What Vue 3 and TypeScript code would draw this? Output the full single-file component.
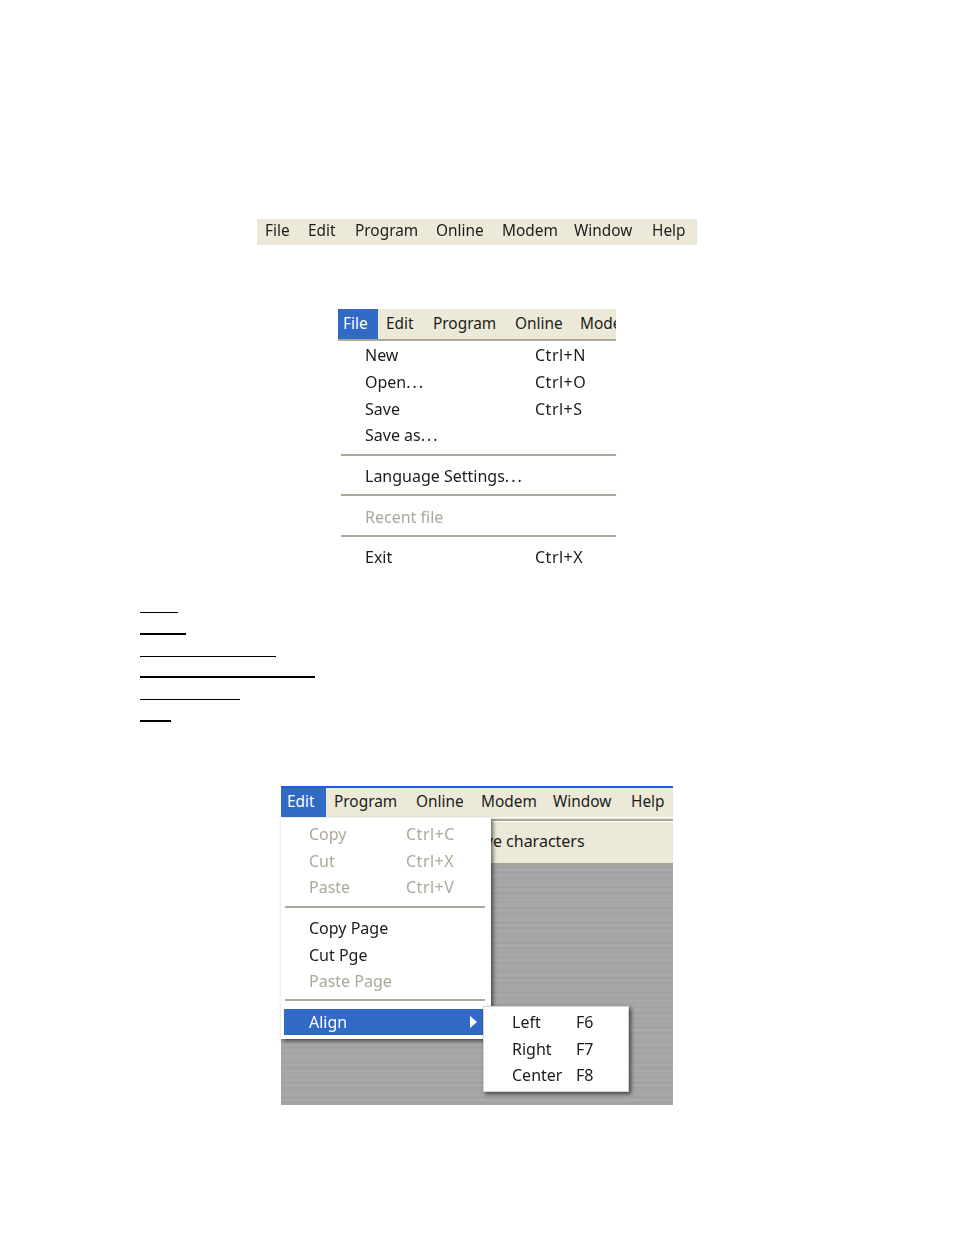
<script setup lang="ts">
interface Row { label: string; dots?: boolean; key?: string; off?: boolean }
const bar = ['File', 'Edit', 'Program', 'Online', 'Modem', 'Window', 'Help']
const fileGroups: Row[][] = [
  [{ label: 'New', key: 'Ctrl+N' }, { label: 'Open', dots: true, key: 'Ctrl+O' }, { label: 'Save', key: 'Ctrl+S' }, { label: 'Save as', dots: true }],
  [{ label: 'Language Settings', dots: true }],
  [{ label: 'Recent file', off: true }],
  [{ label: 'Exit', key: 'Ctrl+X' }],
]
const editGroups: Row[][] = [
  [{ label: 'Copy', key: 'Ctrl+C', off: true }, { label: 'Cut', key: 'Ctrl+X', off: true }, { label: 'Paste', key: 'Ctrl+V', off: true }],
  [{ label: 'Copy Page' }, { label: 'Cut Pge' }, { label: 'Paste Page', off: true }],
]
const sub = [{ label: 'Left', key: 'F6' }, { label: 'Right', key: 'F7' }, { label: 'Center', key: 'F8' }]
const links = [
  { w: 38, h: 1 }, { w: 46, h: 2 }, { w: 136, h: 1 }, { w: 175, h: 2 }, { w: 100, h: 1 }, { w: 31, h: 2 },
]
</script>

<template>
  <div class="page">
    <div class="menubar plain">
      <span v-for="m in bar" :key="m">{{ m }}</span>
    </div>

    <div class="fig-file">
      <div class="menubar file-bar">
        <span class="active">File</span>
        <span>Edit</span><span>Program</span><span>Online</span><span>Modem</span>
      </div>
      <div class="file-menu">
        <template v-for="(g, i) in fileGroups" :key="i">
          <hr v-if="i" class="sep" />
          <div v-for="r in g" :key="r.label" class="row" :class="{ off: r.off }">
            <span class="lab">{{ r.label }}<span v-if="r.dots" class="dots">...</span></span><span class="key">{{ r.key }}</span>
          </div>
        </template>
      </div>
    </div>

    <div class="links">
      <div v-for="(l, i) in links" :key="i" class="link-slot">
        <i :style="{ width: l.w + 'px', height: l.h + 'px' }"></i>
      </div>
    </div>

    <div class="fig-edit">
      <div class="menubar edit-bar">
        <span class="active">Edit</span>
        <span>Program</span><span>Online</span><span>Modem</span><span>Window</span><span>Help</span>
      </div>
      <div class="rule"></div>
      <div class="toolbar"><span>Save characters</span></div>
      <div class="canvas"></div>

      <div class="edit-menu">
        <template v-for="(g, i) in editGroups" :key="i">
          <hr v-if="i" class="sep" />
          <div v-for="r in g" :key="r.label" class="row" :class="{ off: r.off }">
            <span class="lab">{{ r.label }}</span><span class="key">{{ r.key }}</span>
          </div>
        </template>
        <hr class="sep last" />
        <div class="row align">
          <span>Align</span>
          <svg width="7" height="12" viewBox="0 0 7 12"><path d="M0 0 L7 6 L0 12 Z" fill="#fff" /></svg>
        </div>
      </div>

      <div class="sub-menu">
        <div v-for="r in sub" :key="r.label" class="row">
          <span class="lab">{{ r.label }}</span><span>{{ r.key }}</span>
        </div>
      </div>
    </div>
  </div>
</template>

<style>
html, body { background: #fff; }
</style>

<style scoped>
.page {
  width: 954px;
  height: 1235px;
  overflow: hidden;
  padding-top: 219px;
  box-sizing: border-box;
  font-family: "Noto Sans", "Open Sans", sans-serif;
  font-size: 16px;
  color: #1c1c1c;
  background: #fff;
}
.plain, .fig-file, .fig-edit { filter: blur(0.35px); }
.menubar {
  display: grid;
  align-items: center;
  background: #ece9d8;
  white-space: nowrap;
  overflow: hidden;
  font-size: 15.4px;
}
.menubar > span { padding-bottom: 3px; }
.plain {
  width: 440px;
  height: 26px;
  margin-left: 257px;
  padding-left: 8px;
  box-sizing: border-box;
  grid-template-columns: 43px 47px 81px 66px 72px 78px auto;
}
.fig-file {
  width: 278px;
  margin: 64px 0 0 338px;
}
.file-bar {
  height: 30px;
  grid-template-columns: 48px 47px 82px 65px 1fr;
  border-bottom: 2px solid #aca899;
}
.file-bar > span, .edit-bar > span { padding-bottom: 1px; }
.menubar > .active {
  background: #316ac5;
  color: #fff;
  align-self: stretch;
  display: flex;
  align-items: center;
  padding-bottom: 2px;
  box-sizing: border-box;
}
.file-bar .active { width: 40px; padding-left: 5px; }
.file-menu {
  padding: 0 0 0 3px;
}
.row {
  display: flex;
  align-items: center;
  height: 26.67px;
  box-sizing: border-box;
}
.row.off { color: #aca899; }
.lab { flex: none; }
.dots { letter-spacing: 2px; }
.key { letter-spacing: 0.5px; }
.file-menu .row { padding-left: 24px; padding-top: 2px; }
.file-menu .lab { width: 170px; }
.sep {
  border: 0;
  height: 2px;
  background: #aca899;
  margin: 6px 0;
}
.links {
  margin: 22px 0 0 140px;
}
.link-slot {
  height: 21.7px;
  display: flex;
  align-items: flex-end;
}
.link-slot i {
  display: block;
  background: #000;
}
.fig-edit {
  position: relative;
  width: 392px;
  height: 319px;
  margin: 64px 0 0 281px;
  display: flex;
  flex-direction: column;
}
.edit-bar {
  height: 31px;
  flex: none;
  grid-template-columns: 53px 82px 65px 72px 78px 1fr;
  border-top: 2px solid #1c5fd8;
  box-sizing: border-box;
}
.edit-bar .active { width: 45px; padding-left: 6px; }
.rule {
  height: 6px;
  flex: none;
  background: linear-gradient(#fff 0 1px, #ece9d8 1px 2px, #aca899 2px 4px, #fff 4px 5px, #ece9d8 5px);
}
.toolbar {
  height: 42px;
  flex: none;
  display: flex;
  align-items: center;
  padding: 0 0 4px 186px;
  box-sizing: border-box;
  background: #ece9d8;
  border-bottom: 2px solid #a8a596;
}
.canvas {
  flex: 1;
  background-color: #a7a7a7;
  background-image:
    repeating-linear-gradient(rgba(255, 255, 255, 0.03) 0 1px, rgba(0, 0, 0, 0.02) 2px 3px, rgba(255, 255, 255, 0.02) 5px),
    repeating-linear-gradient(rgba(0, 0, 0, 0.02) 0 2px, rgba(255, 255, 255, 0.025) 3px 4px, rgba(0, 0, 0, 0.02) 7px);
}
.edit-menu {
  position: absolute;
  left: 0;
  top: 32px;
  width: 210px;
  height: 221px;
  box-sizing: border-box;
  background: #fff;
  padding: 3px 3px 0;
  box-shadow: 2px 2px 4px rgba(0, 0, 0, 0.6);
}
.edit-menu .row { padding-left: 25px; }
.edit-menu .lab { width: 97px; }
.edit-menu .sep { margin: 5px 3px 7px 1px; }
.edit-menu .sep.last { margin: 4px 3px 8px 1px; }
.edit-menu .row.align {
  background: #316ac5;
  color: #fff;
  justify-content: space-between;
  padding-right: 6px;
  margin: 0 5px 0 0;
}
.sub-menu {
  position: absolute;
  left: 202px;
  top: 220px;
  width: 146px;
  height: 86px;
  box-sizing: border-box;
  background: #fff;
  border: 1px solid #d8d5c8;
  padding: 2px 0 0 28px;
  box-shadow: 2px 2px 4px rgba(0, 0, 0, 0.6);
}
.sub-menu .lab { width: 64px; }
</style>
